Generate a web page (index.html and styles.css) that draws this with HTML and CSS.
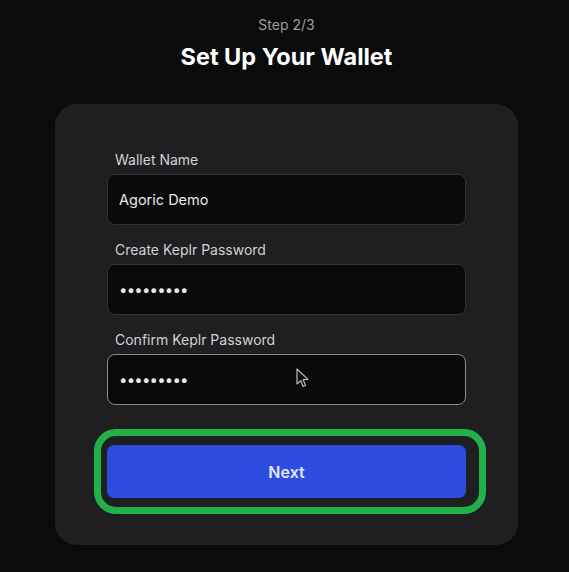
FILE: index.html
```html
<!DOCTYPE html>
<html lang="en">
<head>
<meta charset="utf-8">
<title>Set Up Your Wallet</title>
<link rel="stylesheet" href="styles.css">
</head>
<body>
<main class="page">
  <p class="step">Step 2/3</p>
  <h1 class="title">Set Up Your Wallet</h1>
  <form class="card">
    <div class="field">
      <label class="label" for="name">Wallet Name</label>
      <input class="input" id="name" type="text" value="Agoric Demo">
    </div>
    <div class="field">
      <label class="label" for="pw1">Create Keplr Password</label>
      <input class="input input-pw" id="pw1" type="password" value="123456789">
    </div>
    <div class="field">
      <label class="label" for="pw2">Confirm Keplr Password</label>
      <div class="input-wrap">
        <input class="input input-pw input-focus" id="pw2" type="password" value="123456789">
        <svg class="cursor" width="14" height="20" viewBox="0 0 14 20" aria-hidden="true">
          <path d="M1 1 L1 16 L4.6 12.6 L7.2 18.4 L9.6 17.3 L7.1 11.7 L12 11.4 Z" fill="#0d0d0d" stroke="#b9b9b9" stroke-width="1.2" stroke-linejoin="round"/>
        </svg>
      </div>
    </div>
    <div class="btn-wrap">
      <button class="btn" type="button">Next</button>
      <span class="highlight" aria-hidden="true"></span>
    </div>
  </form>
</main>
</body>
</html>
```
FILE: styles.css
```css
* { box-sizing: border-box; }
html, body {
  margin: 0;
  background: #0b0b0c;
  font-family: Inter, "Noto Sans", "Liberation Sans", sans-serif;
}
.page {
  display: flex;
  flex-direction: column;
  align-items: center;
  padding: 15px 0 0 4px;
  min-height: 572px;
}
.step {
  margin: 0;
  font-size: 14px;
  line-height: 20px;
  color: #9c9c9e;
}
.title {
  margin: 7px 0 0;
  font-size: 23.5px;
  line-height: 30px;
  font-weight: 700;
  color: #ffffff;
  letter-spacing: 0;
}
.card {
  margin-top: 32px;
  width: 463px;
  background: #1f1f21;
  border-radius: 22px;
  padding: 46px 52px 47px;
  display: flex;
  flex-direction: column;
  gap: 15px;
}
.field {
  display: flex;
  flex-direction: column;
  gap: 4px;
}
.label {
  padding-left: 8px;
  font-size: 14px;
  line-height: 20px;
  color: #d2d2d4;
}
.input-wrap { position: relative; }
.input {
  width: 100%;
  height: 51px;
  border: 1px solid #323234;
  border-radius: 8px;
  background: #0a0a0a;
  color: #e8e8ea;
  font-family: Inter, "Noto Sans", "Liberation Sans", sans-serif;
  font-size: 14.5px;
  padding: 0 11px;
  outline: none;
}
.input-pw {
  font-size: 15px;
  letter-spacing: -0.8px;
}
.input-focus { border-color: #8c8c8e; }
.cursor {
  position: absolute;
  left: 189px;
  top: 14px;
}
.btn-wrap {
  position: relative;
  margin-top: 25px;
}
.btn {
  display: block;
  width: 100%;
  height: 53px;
  border: none;
  border-radius: 7px;
  background: #2e4be0;
  color: #e3e7ff;
  font-family: Inter, "Noto Sans", "Liberation Sans", sans-serif;
  font-size: 16px;
  font-weight: 600;
}
.highlight {
  position: absolute;
  left: -13px;
  top: -16px;
  right: -20px;
  bottom: -16px;
  border: 7px solid #22b04b;
  border-radius: 22px;
  pointer-events: none;
}
```
